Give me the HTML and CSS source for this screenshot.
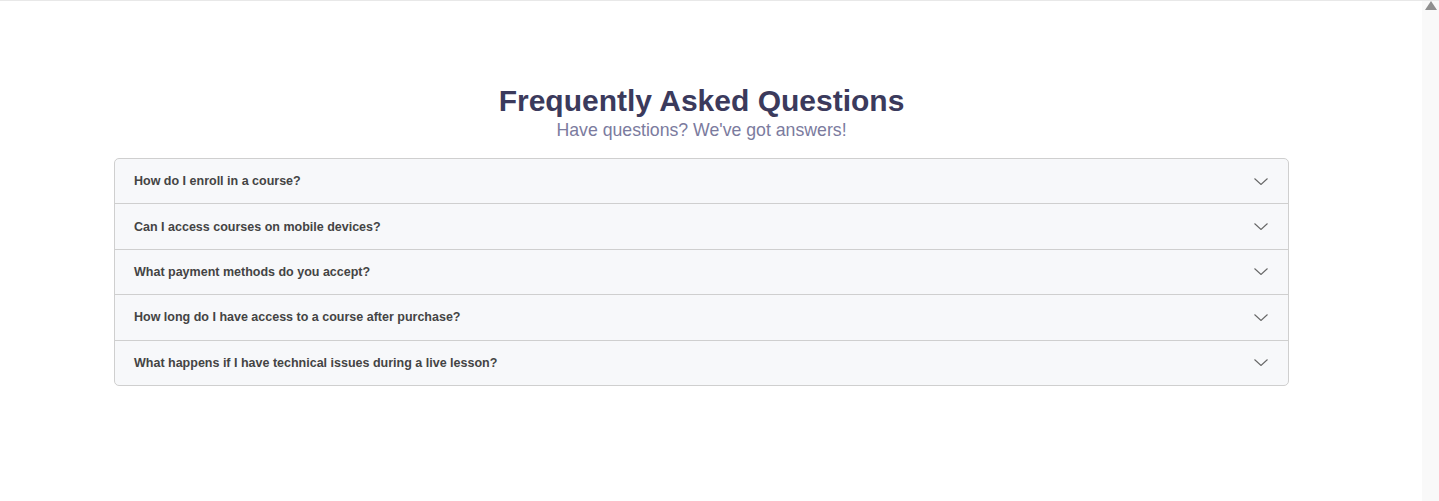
FILE: index.html
```html
<!DOCTYPE html>
<html lang="en">
<head>
<meta charset="utf-8">
<title>FAQ</title>
<link rel="stylesheet" href="styles.css">
</head>
<body>
<div class="topline"></div>
<div class="viewport">
  <main class="page">
    <section class="faq">
      <header class="faq-head">
        <h1 class="faq-title">Frequently Asked Questions</h1>
        <p class="faq-sub">Have questions? We've got answers!</p>
      </header>
      <div class="accordion">
        <div class="acc-item"><span class="acc-q">How do I enroll in a course?</span><svg class="chev" viewBox="0 0 14 7" width="14" height="7"><path d="M0.5 0.5l6.5 6 6.5-6"/></svg></div>
        <div class="acc-item"><span class="acc-q">Can I access courses on mobile devices?</span><svg class="chev" viewBox="0 0 14 7" width="14" height="7"><path d="M0.5 0.5l6.5 6 6.5-6"/></svg></div>
        <div class="acc-item"><span class="acc-q">What payment methods do you accept?</span><svg class="chev" viewBox="0 0 14 7" width="14" height="7"><path d="M0.5 0.5l6.5 6 6.5-6"/></svg></div>
        <div class="acc-item"><span class="acc-q">How long do I have access to a course after purchase?</span><svg class="chev" viewBox="0 0 14 7" width="14" height="7"><path d="M0.5 0.5l6.5 6 6.5-6"/></svg></div>
        <div class="acc-item"><span class="acc-q">What happens if I have technical issues during a live lesson?</span><svg class="chev" viewBox="0 0 14 7" width="14" height="7"><path d="M0.5 0.5l6.5 6 6.5-6"/></svg></div>
      </div>
    </section>
  </main>
  <aside class="scrollbar"><span class="scroll-up"></span></aside>
</div>
</body>
</html>
```
FILE: styles.css
```css
html, body {
  margin: 0;
  padding: 0;
}
body {
  font-family: "Liberation Sans", Arial, sans-serif;
  background: #ffffff;
  height: 501px;
  overflow: hidden;
  display: flex;
  flex-direction: column;
}
.topline {
  height: 1px;
  background: #e8e8e8;
  flex: none;
}
.viewport {
  flex: 1;
  display: flex;
}
.page {
  flex: 1;
  min-width: 0;
}
.scrollbar {
  width: 17px;
  flex: none;
  background: #f9f9f9;
  display: flex;
  justify-content: center;
}
.scroll-up {
  width: 0;
  height: 0;
  margin-top: 0;
  border-left: 6px solid transparent;
  border-right: 6px solid transparent;
  border-bottom: 9px solid #8f8f8f;
}
.faq {
  padding: 81px 133px 0 114px;
}
.faq-head {
  text-align: center;
}
.faq-title {
  margin: 0;
  font-size: 30px;
  line-height: 38px;
  font-weight: 700;
  color: #3b3a5c;
}
.faq-sub {
  margin: 0 0 17px;
  font-size: 17.7px;
  line-height: 21px;
  color: #7b7b9e;
}
.accordion {
  border: 1px solid #cfcfcf;
  border-radius: 5px;
  background: #f7f8fa;
  overflow: hidden;
}
.acc-item {
  display: flex;
  align-items: center;
  justify-content: space-between;
  height: 44.4px;
  padding: 0 20px 0 19px;
  border-top: 1px solid #cfcfcf;
}
.acc-item:first-child {
  border-top: none;
}
.acc-q {
  font-size: 12.5px;
  font-weight: 700;
  color: #444444;
}
.chev {
  fill: none;
  stroke: #666;
  stroke-width: 1.1;
}
```
